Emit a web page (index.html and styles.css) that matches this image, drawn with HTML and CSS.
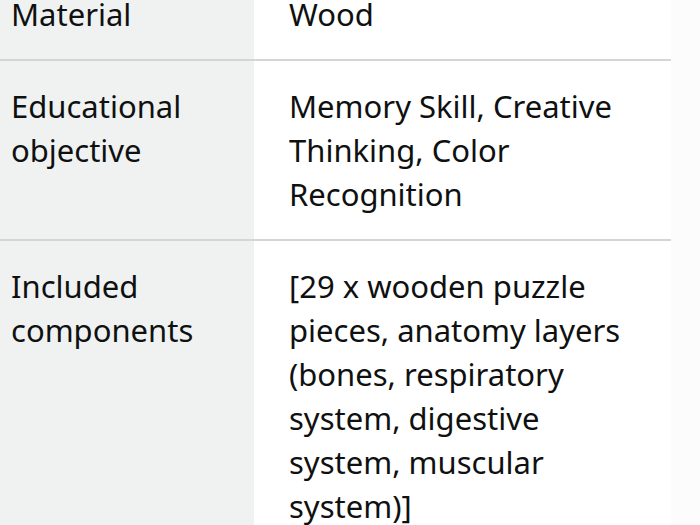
FILE: index.html
```html
<!DOCTYPE html>
<html>
<head>
<meta charset="utf-8">
<link rel="stylesheet" href="styles.css">
</head>
<body>
<table class="specs">
  <tr>
    <th class="label">Material</th>
    <td class="value">Wood</td>
  </tr>
  <tr>
    <th class="label">Educational objective</th>
    <td class="value">Memory Skill, Creative Thinking, Color Recognition</td>
  </tr>
  <tr>
    <th class="label">Included components</th>
    <td class="value">[29 x wooden puzzle pieces, anatomy layers (bones, respiratory system, digestive system, muscular system)]</td>
  </tr>
</table>
</body>
</html>
```
FILE: styles.css
```css
html, body {
  margin: 0;
  padding: 0;
  background: #fcfcfc;
}
body {
  font-family: "Noto Sans", "Open Sans", sans-serif;
  color: #0f1111;
  overflow: hidden;
}
.specs {
  width: 671px;
  border-collapse: collapse;
  margin-top: -31px;
  table-layout: fixed;
}
.specs tr {
  border-bottom: 2px solid #d3d6d6;
}
.label, .value {
  font-size: 31px;
  line-height: 44px;
  font-weight: normal;
  text-align: left;
  vertical-align: top;
  padding: 23px 11px 23px 11px;
}
.label {
  width: 232px;
  background: #f0f2f2;
}
.value {
  background: #ffffff;
  padding-left: 35px;
  padding-right: 14px;
}
```
